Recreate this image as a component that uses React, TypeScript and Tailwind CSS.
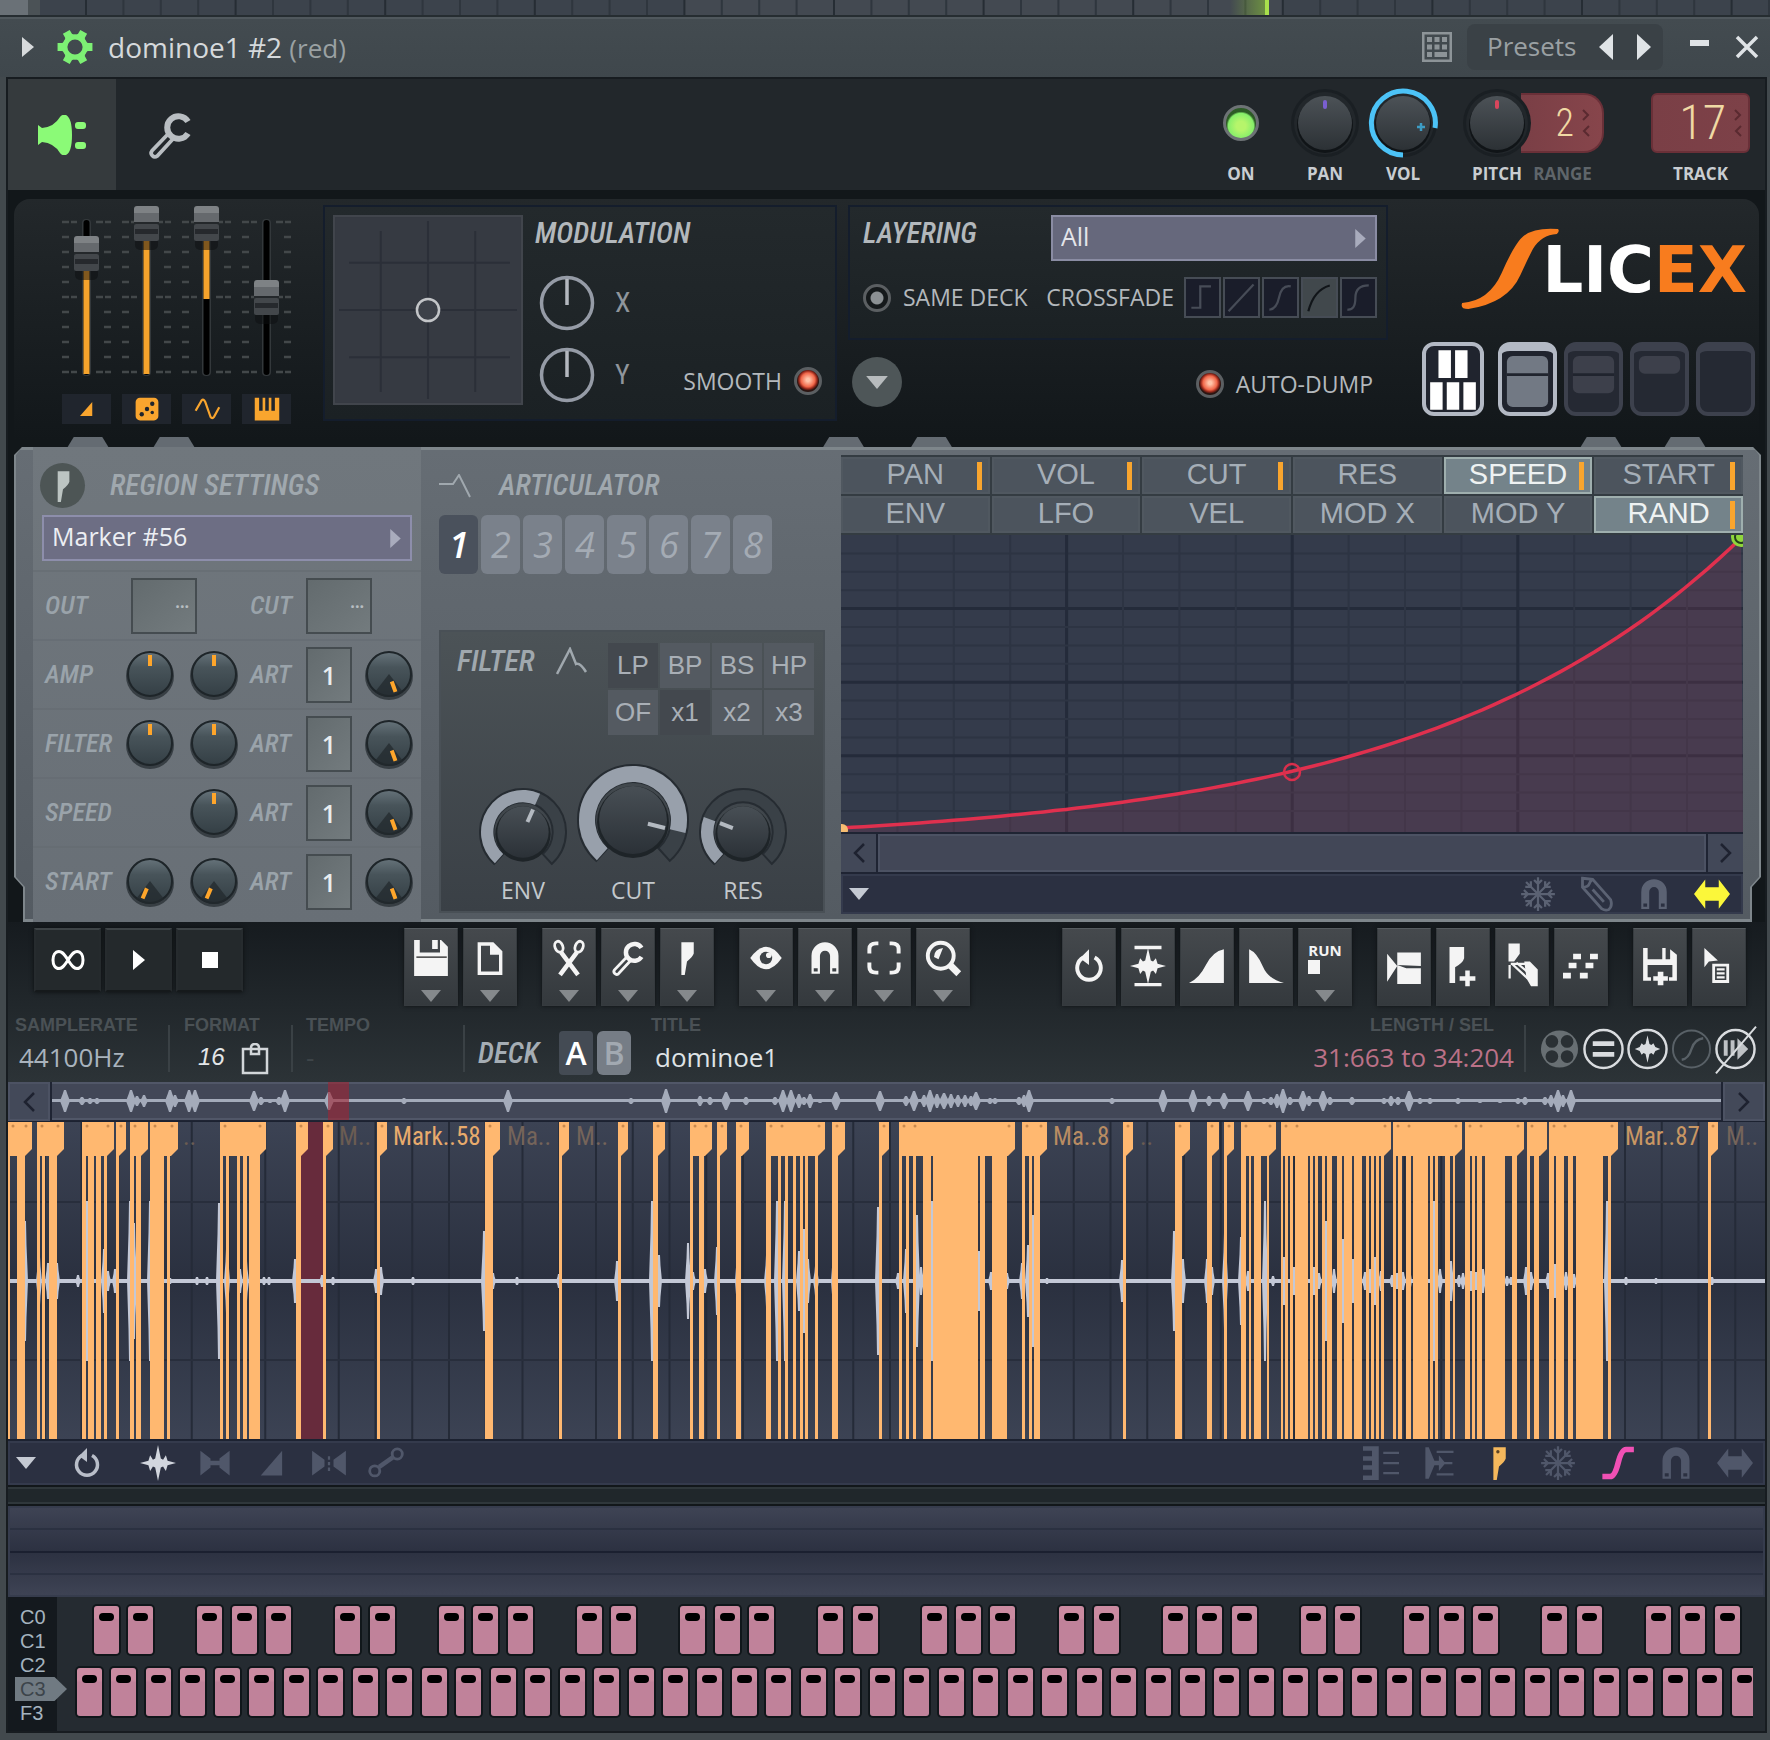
import React from "react";
import clsx from "clsx";

const narrow = "font-['Roboto_Condensed','Liberation_Sans',sans-serif]";
const display = "font-['Roboto_Condensed','Liberation_Sans',sans-serif] font-medium italic";

/* ---------- shared bits ---------- */

function Icon({
  children,
  className,
  box = "0 0 32 32",
}: {
  children: React.ReactNode;
  className?: string;
  box?: string;
}) {
  return (
    <svg viewBox={box} className={clsx("shrink-0", className)} fill="currentColor" aria-hidden>
      {children}
    </svg>
  );
}

const Down = ({ className }: { className?: string }) => (
  <Icon box="0 0 20 12" className={clsx("h-3 w-5", className)}>
    <path d="M0 0h20L10 12z" />
  </Icon>
);

const polar = (c: number, r: number, deg: number) => {
  const a = ((deg - 90) * Math.PI) / 180;
  return `${(c + r * Math.cos(a)).toFixed(2)} ${(c + r * Math.sin(a)).toFixed(2)}`;
};

const ring = (c: number, r1: number, r2: number, from: number, to: number) => {
  const big = to - from > 180 ? 1 : 0;
  return `M${polar(c, r1, from)}A${r1} ${r1} 0 ${big} 1 ${polar(c, r1, to)}L${polar(c, r2, to)}A${r2} ${r2} 0 ${big} 0 ${polar(c, r2, from)}Z`;
};

function Range({ label, value }: { label: string; value: number }) {
  return (
    <input
      type="range"
      aria-label={label}
      defaultValue={value}
      className="absolute inset-0 h-full w-full cursor-pointer opacity-0"
    />
  );
}

function SmallKnob({ label, angle }: { label: string; angle: number }) {
  return (
    <div className="relative h-[50px] w-[50px]">
      <svg viewBox="0 0 50 50" className="h-full w-full">
        <ellipse cx="25" cy="26" rx="24" ry="24" fill="#22292e" opacity=".7" />
        <circle cx="25" cy="24" r="22" fill="url(#knobSmall)" stroke="#1e2529" strokeWidth="2" />
        {angle !== 0 && <path d="M25 24L11 42A22 22 0 0 0 39 42Z" fill="#23292d" opacity=".75" />}
        <path d="M25 5v11" stroke="#ffa62b" strokeWidth="4" transform={`rotate(${angle} 25 24)`} />
      </svg>
      <Range label={label} value={angle === 0 ? 50 : angle > 180 ? 0 : 100} />
    </div>
  );
}

const topLabel = "text-[17px] leading-7 font-bold";

function TopKnob({ label, dot }: { label: string; dot: string }) {
  const vol = label === "VOL";
  return (
    <div className="flex w-[70px] flex-col items-center">
      <div className="relative h-[74px] w-[70px]">
        <svg viewBox="0 0 70 74" className="h-full w-full">
          <circle cx="35" cy="37" r="34" fill="#1a1f23" />
          <circle cx="35" cy="37" r="31" fill="#22272b" />
          <circle cx="35" cy="39" r="28" fill="#101417" />
          <circle cx="35" cy="37" r="27" fill="url(#knobTop)" />
          {vol ? (
            <>
              <path d="M35 69A32 32 0 1 1 67 42" fill="none" stroke="#4cc3f7" strokeWidth="5" />
              <path d="M53 37v8M49 41h8" stroke={dot} strokeWidth="2.500" />
            </>
          ) : (
            <path d="M35 16v5" stroke={dot} strokeWidth="4" strokeLinecap="round" />
          )}
        </svg>
        <Range label={label} value={vol ? 78 : 50} />
      </div>
      <span className={clsx(topLabel, "text-[#c9cdd1]")}>{label}</span>
    </div>
  );
}

function BigKnob({ label, size, to }: { label: string; size: number; to: number }) {
  const c = size / 2;
  const R = c - 1;
  const inner = R * 0.69;
  return (
    <label className="flex flex-col items-center">
      <span className="relative block">
        <svg width={size} height={size} viewBox={`0 0 ${size} ${size}`}>
          <path d={ring(c, R, inner, -138, 138)} fill="#3a4147" stroke="#262c32" strokeWidth="2" />
          <path d={ring(c, R - 1, inner, -138, to)} fill="#98a0ab" />
          <circle cx={c} cy={c + 2} r={inner - 2} fill="#1e2428" />
          <circle cx={c} cy={c} r={inner - 4} fill="url(#knobBig)" />
          <path
            d={`M${c} ${c - inner + 5}v${R * 0.32}`}
            stroke="#b4bac1"
            strokeWidth="4"
            transform={`rotate(${to} ${c} ${c})`}
          />
        </svg>
        <Range label={label} value={Math.round(((to + 138) / 276) * 100)} />
      </span>
      <span className="text-[23px] leading-7 text-[#c3c8cc]">{label}</span>
    </label>
  );
}

const led =
  "m-0 h-[28px] w-[28px] shrink-0 appearance-none rounded-full border-[3px] border-[#5b5f62]";
const ledOff = "bg-[radial-gradient(circle,#8b9093_38%,#15191b_45%)]";
const ledRed = "bg-[radial-gradient(circle_at_50%_45%,#ffc3a8_10%,#f2684a_42%,#8e2418_56%,#2a1512_66%)]";

/* ---------- icon drawings, all on a 32 grid ---------- */

const wrench = (
  <>
    <path d="M28 7A7.500 7.500 0 1 0 28 15" fill="none" stroke="currentColor" strokeWidth="4" />
    <path d="M16 14L4 26.500A2.500 2.500 0 0 0 7.500 30L19 17.500" fill="none" stroke="currentColor" strokeWidth="2.500" />
  </>
);
const magnet = (
  <path
    d="M4 30V14a12 12 0 0 1 24 0v16h-7.500V14a4.500 4.500 0 0 0-9 0v16zM6 25v3h3.500v-3zM22.500 25v3H26v-3z"
    fillRule="evenodd"
  />
);
const flag = <path d="M11 2h11v10q-1 3-6 7l-2 12h-3z" />;
const snow = (
  <g fill="none" stroke="currentColor" strokeWidth="2">
    {[0, 45, 90, 135, 180, 225, 270, 315].map((a) => (
      <path key={a} d="M16 16V1M12.500 3.500L16 7l3.500-3.500" transform={`rotate(${a} 16 16)`} />
    ))}
  </g>
);
const arrows = <path d="M0 16L10 3v7h12V3l10 13-10 13v-7H10v7z" />;
const spike = (
  <path d="M16 0l2.500 12 2 1 2.500-4 1.500 5 7.500 2-7.500 2-1.500 5-2.500-4-2 1L16 32l-2.500-12-2-1L9 23l-1.500-5L0 16l7.500-2L9 9l2.500 4 2-1z" />
);
const reload = (
  <>
    <path d="M11 8.500A10.500 10.500 0 1 0 21 8.500" fill="none" stroke="currentColor" strokeWidth="3.500" />
    <path d="M16 1v14L8 9z" />
  </>
);
const save = (
  <>
    <path d="M1 0h5v11h18V0h1l6 6v26H1z" />
    <path d="M17 0h5v8h-5z" />
    <path d="M3 14.500h27v1.500H3z" fill="#555" />
  </>
);

type Tool = { id: string; down?: boolean; art: React.ReactNode };

const toolGroups: Tool[][] = [
  [
    { id: "Save", down: true, art: save },
    {
      id: "New",
      down: true,
      art: <path d="M5 2h14l8 8v21H5zM8 5v23h16V13h-8V5z" fillRule="evenodd" />,
    },
  ],
  [
    {
      id: "Cut",
      down: true,
      art: (
        <g fill="none" stroke="currentColor" strokeWidth="2.500">
          <ellipse cx="7" cy="6" rx="3.500" ry="5" transform="rotate(-20 7 6)" />
          <ellipse cx="25" cy="6" rx="3.500" ry="5" transform="rotate(20 25 6)" />
          <path d="M9 11L24 31M23 11L8 31" strokeWidth="4" />
        </g>
      ),
    },
    { id: "Tools", down: true, art: wrench },
    { id: "Markers", down: true, art: flag },
  ],
  [
    {
      id: "View",
      down: true,
      art: (
        <>
          <path d="M2 16Q16-4 30 16Q16 36 2 16z" />
          <circle cx="16" cy="16" r="5.500" fill="#3e4347" />
          <circle cx="18.500" cy="13.500" r="2.500" />
        </>
      ),
    },
    { id: "Snap", down: true, art: magnet },
    {
      id: "Zoom area",
      down: true,
      art: (
        <path
          d="M3 12V8q0-5 6-5h2M21 3h2q6 0 6 5v4M29 20v4q0 5-6 5h-2M11 29H9q-6 0-6-5v-4"
          fill="none"
          stroke="currentColor"
          strokeWidth="3.500"
        />
      ),
    },
    {
      id: "Zoom",
      down: true,
      art: (
        <>
          <circle cx="14" cy="14" r="11.500" fill="none" stroke="currentColor" strokeWidth="3.500" />
          <path d="M8 15q0-7 8-8l-4 10z" />
          <path d="M22 22l8 8" stroke="currentColor" strokeWidth="6" />
        </>
      ),
    },
  ],
];

const editGroups: Tool[][] = [
  [
    { id: "Undo", art: reload },
    {
      id: "Normalize",
      art: (
        <>
          <path d="M4 -2h24v3H4zM4 31h24v3H4z" />
          <path d="M16 0l2.500 11 2 1 2.500-3 1.500 5 7.500 2-7.500 2-1.500 5-2.500-3-2 1L16 32l-2.500-11-2-1L9 23l-1.500-5L0 16l7.500-2L9 9l2.500 3 2-1z" />
        </>
      ),
    },
    { id: "Fade in", art: <path d="M0 31Q9 27 15 15Q21 3 31 1v30z" /> },
    { id: "Fade out", art: <path d="M1 1Q8 4 13 16Q18 28 32 31H1z" /> },
    { id: "Run", down: true, art: null },
  ],
  [
    { id: "Trim", art: <path d="M1 5l9 11L1 30zM10 4h21v12l-21-1 8 3h13v14H10z" /> },
    {
      id: "Add marker",
      art: (
        <>
          <path d="M4-1h13v10q-1 4-8 8v14H4z" />
          <path d="M18 20h4v5h5v4h-5v5h-4v-5h-5v-4h5z" />
        </>
      ),
    },
    {
      id: "Slice",
      art: (
        <>
          <path d="M4-4h10v9l-5 7H4zM18 12h5l7 7v15h-6l-4-7z" />
          <path d="M5 15v12M7 14l14 13M11 13l12 10M6 14h14" stroke="currentColor" strokeWidth="2" />
        </>
      ),
    },
    {
      id: "Step",
      art: <path d="M9 5h7v5H9zM24 5h7v5h-7zM5 13h7v5H5zM20 13h7v5h-7zM0 22h7v5H0zM15 22h7v5h-7z" />,
    },
  ],
  [
    {
      id: "Save as",
      art: (
        <path
          d="M1 0h4v10h13V0h3v10h4V1l6 5v23h-7v-3h3V15H5v11h3v3H1zM14 21h5v4h4v4h-4v4h-5v-4h-4v-4h4z"
          fillRule="evenodd"
        />
      ),
    },
    {
      id: "Drag selection",
      art: (
        <>
          <path d="M3 0l12 11-8 1-4 5z" />
          <path d="M10 14h15v17H10zM12.500 16.500v12h10v-12zM14 18h7v2h-7zM14 21.500h7v2h-7zM14 25h7v2h-7z" fillRule="evenodd" />
        </>
      ),
    },
  ],
];

function ToolButton({ id, down, art }: Tool) {
  return (
    <button
      aria-label={id}
      className="flex h-[78px] w-[54px] flex-col items-center border border-[#363b3f] border-t-[#565c60] bg-linear-to-b from-[#45494d] to-[#34393d] pt-[11px] text-[#f4f4f4] shadow-[0_0_4px_#0d1113]"
    >
      {id === "Run" ? (
        <span className="flex h-[42px] flex-col items-start text-[15px] leading-5 font-bold">
          RUN
          <span className="h-[14px] w-3 bg-[#f4f4f4]" />
        </span>
      ) : (
        <Icon className={clsx("h-9 w-9 overflow-visible", !down && "mt-2")}>{art}</Icon>
      )}
      {down && <Down className={clsx("text-[#85898c]", id === "Run" ? "mt-2" : "mt-[14px]")} />}
    </button>
  );
}

/* ---------- title + toolbar ---------- */

function TimelineStrip() {
  return (
    <svg viewBox="0 0 1770 17" preserveAspectRatio="none" className="block h-[17px] w-full bg-[#3c434c]">
      <rect x="684" width="598" height="17" fill="#434951" />
      <rect width="28" height="17" fill="#6a7177" />
      <rect x="28" width="12" height="17" fill="#4b5256" />
      {Array.from({ length: 46 }, (_, i) => (
        <path key={i} d={`M${86 + i * 37.4} 0v17`} stroke={i % 4 === 0 ? "#262d34" : "#2f363e"} strokeWidth="2" />
      ))}
      <rect x="1230" width="36" height="17" fill="url(#playhead)" />
      <rect x="1265" width="4" height="17" fill="#a9e04c" />
      <rect y="15" width="1770" height="2" fill="#262d31" />
    </svg>
  );
}

function TitleBar() {
  return (
    <header className="flex h-[60px] items-center border-t-2 border-[#50585d] bg-linear-to-b from-[#434b50] to-[#3f474c] pr-[11px] pb-[3px] pl-[22px] text-[26px]">
      <Icon box="0 0 12 20" className="h-5 w-3 text-[#d7dadc]">
        <path d="M0 0l12 10L0 20z" />
      </Icon>
      <Icon className="ml-[23px] h-9 w-9 text-[#7df074]">
        <circle cx="16" cy="16" r="9" fill="none" stroke="currentColor" strokeWidth="4.500" />
        {[30, 90, 150, 210, 270, 330].map((a) => (
          <path key={a} d="M10.500 8.500l2-4v-4h7v4l2 4z" transform={`rotate(${a} 16 16)`} />
        ))}
      </Icon>
      <h1 className="ml-[15px] text-[28px] text-[#d5d9dc]">
        dominoe1 #2 <span className="text-[26px] text-[#9aa1a3]">(red)</span>
      </h1>
      <button aria-label="Keyboard" className="ml-auto text-[#8d9498]">
        <Icon className="h-[32px] w-[32px]">
          <path d="M1 1h30v30H1zM3.500 3.500v25h25v-25z" fillRule="evenodd" />
          <path d="M6 6h5v5H6zM13.500 6h5v5h-5zM21 6h5v5h-5zM6 13.500h5v5H6zM13.500 13.500h5v5h-5zM21 13.500h5v5h-5zM6 21h5v5H6zM13.500 21H26v5H13.500z" />
        </Icon>
      </button>
      <div className="ml-[14px] flex h-[46px] w-[196px] items-center rounded-lg bg-[#3a4146] pl-5 text-[#9aa0a3]">
        <span>Presets</span>
        <button aria-label="Previous preset" className="ml-auto text-[#dfe3e6]">
          <Icon box="0 0 14 26" className="h-[26px] w-[14px]">
            <path d="M14 0L0 13l14 13z" />
          </Icon>
        </button>
        <button aria-label="Next preset" className="mr-3 ml-6 text-[#dfe3e6]">
          <Icon box="0 0 14 26" className="h-[26px] w-[14px]">
            <path d="M0 0l14 13L0 26z" />
          </Icon>
        </button>
      </div>
      <button aria-label="Minimize" className="mb-2 ml-[27px] h-[6px] w-[19px] bg-[#dfe3e6]" />
      <button aria-label="Close" className="ml-[26px] text-[#dfe3e6]">
        <Icon box="0 0 24 24" className="h-6 w-6">
          <path d="M2 2l20 20M22 2L2 22" stroke="currentColor" strokeWidth="3.500" />
        </Icon>
      </button>
    </header>
  );
}

function Toolbar() {
  const spin = (
    <span className="flex flex-col text-[#5a2a30]">
      <Icon box="0 0 8 12" className="h-3 w-2">
        <path d="M1 1l5 5-5 5" fill="none" stroke="currentColor" strokeWidth="2" />
      </Icon>
      <Icon box="0 0 8 12" className="mt-1 h-3 w-2">
        <path d="M7 1L2 6l5 5" fill="none" stroke="currentColor" strokeWidth="2" />
      </Icon>
    </span>
  );
  return (
    <div className="flex h-[111px] items-stretch bg-[#22272b] pr-[15px]">
      <button aria-label="Instrument" className="flex w-[108px] items-center justify-center bg-[#353a3d] text-[#8bfa77]">
        <Icon box="0 0 48 40" className="h-10 w-12">
          <path d="M0 10l4 3Q16 12 22 2q2-3 6-2 6 3 6 20t-6 20q-4 1-6-2Q16 28 4 27l-4 3z" />
          <rect x="37" y="7" width="11" height="7" rx="3" />
          <rect x="37" y="27" width="11" height="7" rx="3" />
        </Icon>
      </button>
      <button aria-label="Settings" className="flex w-[108px] items-center justify-center text-[#b9bec2]">
        <Icon className="h-[48px] w-[48px]">{wrench}</Icon>
      </button>
      <div className="ml-auto flex items-start pt-[7px] text-[#c9cdd1]">
        <label className="flex w-10 flex-col items-center">
          <span className="flex h-[74px] items-center">
            <input
              type="checkbox"
              defaultChecked
              className="h-[36px] w-[36px] appearance-none rounded-full border-[3px] border-[#6d7275] bg-[radial-gradient(circle_at_50%_60%,#b6f56b_20%,#86ee6a_54%,#2d5b26_62%)]"
            />
          </span>
          <span className={topLabel}>ON</span>
        </label>
        <div className="ml-[29px] flex gap-2">
          <TopKnob label="PAN" dot="#7a5fd0" />
          <TopKnob label="VOL" dot="#3d9cc4" />
        </div>
        <div className="z-10 ml-6">
          <TopKnob label="PITCH" dot="#d8465c" />
        </div>
        <label className="-ml-[11px] flex w-[83px] flex-col items-center">
          <span className="flex h-[74px] w-full items-center">
            <span className="flex h-[60px] w-full items-center rounded-r-[20px] border-2 border-l-0 border-[#6a3038] bg-linear-to-r from-[#7a3f46] to-[#87454b] pr-3">
              <input
                defaultValue="2"
                className={clsx(narrow, "w-full min-w-0 pr-2 text-right text-[38px] font-light text-[#f0d9a4]")}
              />
              {spin}
            </span>
          </span>
          <span className={clsx(topLabel, "text-[#5f656a]")}>RANGE</span>
        </label>
        <label className="ml-[47px] flex w-[99px] flex-col items-center">
          <span className="flex h-[74px] w-full items-center">
            <span className="flex h-[60px] w-full items-center rounded-md border-2 border-[#6a3038] bg-linear-to-r from-[#7a3f46] to-[#7d4148] pr-[6px]">
              <input
                defaultValue="17"
                className={clsx(narrow, "w-full min-w-0 pr-2 text-right text-[48px] font-light text-[#f0d9a4]")}
              />
              {spin}
            </span>
          </span>
          <span className={topLabel}>TRACK</span>
        </label>
      </div>
    </div>
  );
}

/* ---------- synth panel ---------- */

const faders = [
  { id: "Volume", top: 30, from: 64, to: 168, art: <path d="M22 8v16H8z" /> },
  {
    id: "Randomness",
    top: 0,
    from: 34,
    to: 168,
    art: (
      <>
        <rect x="3" y="3" width="26" height="26" rx="5" />
        <g fill="#20252d">
          <circle cx="10" cy="22" r="2.500" />
          <circle cx="16" cy="16" r="2.500" />
          <circle cx="22" cy="10" r="2.500" />
          <circle cx="22" cy="20" r="2" />
        </g>
      </>
    ),
  },
  {
    id: "LFO",
    top: 0,
    from: 34,
    to: 93,
    art: <path d="M3 18L10 6q2-2 4 2l6 17q2 3 4 0l6-11" fill="none" stroke="currentColor" strokeWidth="2.500" />,
  },
  { id: "Key", top: 74, from: 0, to: 0, art: <path d="M2 3h5v15h4V3h3v15h4V3h3v15h4V3h5v26H2z" /> },
];

function Fader({ top, from, to, id, art }: (typeof faders)[number]) {
  return (
    <label className="flex flex-col">
      <span className="relative block h-[170px] w-[49px]">
        <svg viewBox="0 0 49 170" className="h-full w-full">
          {Array.from({ length: 11 }, (_, i) => {
            const w = i % 5 === 0 ? 15 : 7;
            return (
              <path key={i} d={`M0 ${16 + i * 15}h${w}M${49 - w} ${16 + i * 15}h${w}`} stroke="#43484a" strokeWidth="2.500" strokeDasharray="7 2" />
            );
          })}
          <rect x="20" y="13" width="9" height="157" rx="4" fill="#33383b" />
          <rect x="21.500" y="14" width="6" height="155" rx="3" fill="#000" />
          {to > 0 && <rect x="21.500" y={from} width="6" height={to - from} fill="#f5a32c" />}
          <rect x="13" y={top + 4} width="23" height="40" rx="5" fill="#0b0e10" opacity=".5" />
          <rect x="12" y={top} width="25" height="16" rx="3" fill="#7e8285" />
          <rect x="12" y={top + 7} width="25" height="9" fill="#65696d" />
          <path d={`M12 ${top + 17}h25M12 ${top + 24}h25`} stroke="#24282b" strokeWidth="2" />
          <rect x="12" y={top + 18} width="25" height="17" rx="2" fill="#43474b" />
          <rect x="13" y={top + 23} width="23" height="5" fill="#26292d" />
        </svg>
        <Range label={id} value={50} />
      </span>
      <span className="mt-[18px] flex h-[30px] items-center justify-center bg-[#20252d] text-[#f9a52e]">
        <Icon className="h-[28px] w-[30px]">{art}</Icon>
      </span>
    </label>
  );
}

const crossfades = ["M6 32h10V8h12", "M4 36L32 6", "M6 34q8 0 11-14T30 8", "M6 36Q12 12 30 7", "M6 34q9 1 9-13T30 7"];

function SynthPanel() {
  return (
    <div className="mx-[6px] mt-[9px] flex h-[241px] rounded-t-2xl bg-linear-to-b from-[#23282b] to-[#12171a] text-[#b3b8bc]">
      <div className="flex w-[309px] shrink-0 gap-[11px] pt-[7px] pl-[48px]">
        {faders.map((f) => (
          <Fader key={f.id} {...f} />
        ))}
      </div>
      <section className="mt-[6px] flex h-[216px] w-[514px] shrink-0 border-2 border-[#141d2c] bg-linear-to-b from-[#23292c] to-[#1b2124] p-2">
        <svg viewBox="0 0 189 189" className="h-[190px] w-[190px]">
          <rect x="1" y="1" width="187" height="187" fill="#363a42" stroke="#41454c" strokeWidth="2" />
          <g stroke="#2b2f38" strokeWidth="2">
            <path d="M47.500 16v160M94.500 6v177M141.500 16v160M16 47.500h160M6 94.500h177M16 141.500h160" />
          </g>
          <circle cx="94.500" cy="94.500" r="11" fill="#3d4149" stroke="#c3c5c8" strokeWidth="2.500" />
        </svg>
        <div className="ml-3 flex flex-1 flex-col pr-[5px]">
          <h2 className={clsx(display, "text-[29px] leading-9")}>MODULATION</h2>
          <div className="mt-4 flex h-[72px] items-center gap-5 pl-1">
            <ModDial label="X" />
          </div>
          <div className="flex h-[72px] items-center gap-5 pl-1">
            <ModDial label="Y" />
            <label className="mt-3 ml-auto flex items-center gap-3 text-[23px]">
              SMOOTH
              <input type="checkbox" defaultChecked className={clsx(led, ledRed)} />
            </label>
          </div>
        </div>
      </section>
      <div className="mt-[6px] ml-[11px] w-[540px] shrink-0">
        <section className="h-[135px] border-2 border-[#141d2c] bg-linear-to-b from-[#23292c] to-[#1b2124] pt-2 pr-[9px] pl-[13px]">
          <div className="flex items-start justify-between">
            <h2 className={clsx(display, "text-[29px] leading-9")}>LAYERING</h2>
            <Select label="Layering" value="All" className="w-[326px] border-[#8a8ca3] bg-[#66687c] text-[#e4e5ea]" />
          </div>
          <div className="mt-4 flex items-center text-[23px]">
            <label className="flex items-center gap-3">
              <input type="checkbox" className={clsx(led, ledOff)} />
              SAME DECK
            </label>
            <span className="ml-auto pr-[10px]">CROSSFADE</span>
            <div className="flex gap-[2px]">
              {crossfades.map((d, i) => (
                <button
                  key={d}
                  aria-label={`Crossfade ${i + 1}`}
                  className={clsx("h-[41px] w-[37px] border-2 border-[#464c55]", i === 3 ? "bg-[#41484c]" : "bg-[#1a1d2a]")}
                >
                  <svg viewBox="0 0 37 41" className="h-full w-full">
                    <path d={d} fill="none" stroke={i === 3 ? "#111519" : "#474c57"} strokeWidth="2.500" />
                  </svg>
                </button>
              ))}
            </div>
          </div>
        </section>
        <div className="mt-[17px] flex items-center justify-between pr-[15px] pl-1">
          <button aria-label="Menu" className="flex h-[50px] w-[50px] items-center justify-center rounded-full bg-[#4e5658]">
            <Down className="h-[13px] w-6 text-[#b7bbbd]" />
          </button>
          <label className="flex items-center gap-3 pt-1 text-[23px]">
            <input type="checkbox" defaultChecked className={clsx(led, ledRed)} />
            AUTO-DUMP
          </label>
        </div>
      </div>
      <div className="flex flex-1 flex-col items-end pt-[28px] pr-1">
        <div className="flex items-start pr-2">
          <svg viewBox="0 0 96 82" preserveAspectRatio="none" className="h-[82px] w-[100px]">
            <path d="M94 2Q96 4 93 7Q78 8 70 22Q64 34 58 48Q46 76 8 82Q0 82 2 76Q28 74 40 46Q50 22 58 12Q68 0 94 2z" fill="#f87c1e" />
          </svg>
          <span className="mt-[8px] -ml-[18px] font-['DejaVu_Sans',sans-serif] text-[64px] leading-[70px] font-bold text-white">
            LIC<span className="text-[#f87c1e]">EX</span>
          </span>
        </div>
        <div className="mt-[33px] flex gap-[7px]">
          <LayoutButton kind={0} />
          <LayoutButton kind={1} />
          <LayoutButton kind={2} />
          <LayoutButton kind={3} />
          <LayoutButton kind={4} />
        </div>
      </div>
    </div>
  );
}

function ModDial({ label }: { label: string }) {
  return (
    <>
      <span className="relative block">
        <svg viewBox="0 0 56 56" className="h-[56px] w-[56px]">
          <circle cx="28" cy="28" r="25.500" fill="none" stroke="#959ba6" strokeWidth="3.500" />
          <path d="M28 4v26" stroke="#b4b8bf" strokeWidth="3.500" />
        </svg>
        <Range label={label} value={50} />
      </span>
      <span className={clsx(narrow, "text-[28px] text-[#8f959c]")}>{label}</span>
    </>
  );
}

function LayoutButton({ kind }: { kind: number }) {
  const lit = kind < 2;
  return (
    <button
      aria-label={`Layout ${kind + 1}`}
      className={clsx(
        "h-[74px] rounded-xl border-[4px]",
        lit ? "border-[#b3b9c4] bg-[#20242e]" : "border-[#3d414d] bg-[#252933]",
        kind === 0 ? "mr-[7px] w-[62px]" : "w-[59px] border-t-[9px]"
      )}
    >
      <svg viewBox="0 0 52 62" preserveAspectRatio="none" className="h-full w-full">
        {kind === 0 && <path d="M12 4h12v26H12zM28 4h12v26H28zM4 34h12v26H4zM20 34h12v26H20zM36 34h12v26H36z" fill="#fff" />}
        {kind > 0 && kind < 4 && (
          <rect x="5" y="5" width="42" height={[0, 52, 38, 18][kind]} rx="6" fill={kind === 1 ? "#727984" : "#3d404b"} />
        )}
        {(kind === 1 || kind === 2) && <path d="M5 24h42" stroke="#20242e" strokeWidth="3" />}
      </svg>
    </button>
  );
}

function Select({ label, value, className }: { label: string; value: string; className: string }) {
  return (
    <div className="relative">
      <select aria-label={label} className={clsx("h-[46px] appearance-none rounded-none border-2 px-2 pb-[2px] text-[25px]", className)}>
        <option>{value}</option>
      </select>
      <Icon box="0 0 11 20" className="pointer-events-none absolute top-[14px] right-[11px] h-[19px] w-[11px] text-[#a9acbd]">
        <path d="M0 0l11 10L0 20z" />
      </Icon>
    </div>
  );
}

/* ---------- region settings, articulator, filter ---------- */

function ArtBox({ label }: { label: string }) {
  return (
    <input
      aria-label={label}
      defaultValue="1"
      className="h-[56px] w-[46px] border-2 border-[#454c50] bg-linear-to-br from-[#636b6e] to-[#737b7e] text-center text-[25px] font-semibold text-[#e9edf0]"
    />
  );
}

const regionRows: { name: string; left: number[] }[] = [
  { name: "AMP", left: [0, 0] },
  { name: "FILTER", left: [0, 0] },
  { name: "SPEED", left: [0] },
  { name: "START", left: [203, 203] },
];

function RegionSettings() {
  const rowStyle =
    "grid h-[69px] grid-cols-[80px_64px_61px_56px_58px_50px] items-center border-t-2 border-[#646b71]/60 pl-3 text-[#9aa3aa]";
  const rowLabel = clsx(display, "text-[26px]");
  const slot =
    "col-span-2 h-[56px] w-[66px] border-2 border-[#454c50] bg-linear-to-br from-[#636b6e] to-[#737b7e] pr-[6px] pb-2 text-right text-base font-bold text-[#b7bdc1]";
  return (
    <section className="w-[388px] shrink-0 bg-linear-to-b from-[#70777d] to-[#686f76]">
      <div className="flex h-[68px] items-center gap-[25px] pt-[9px] pl-[7px]">
        <button aria-label="Marker" className="flex h-[45px] w-[45px] items-center justify-center rounded-full bg-[#4d5555] text-[#bcc4c2]">
          <Icon className="h-[34px] w-[34px]">{flag}</Icon>
        </button>
        <h2 className={clsx(display, "text-[29px] text-[#a0a8ae]")}>REGION SETTINGS</h2>
      </div>
      <div className="mb-[9px] px-[9px]">
        <Select label="Region" value="Marker #56" className="w-full border-[#8d8eab] bg-[#6d6e84] text-[#eceef3]" />
      </div>
      <div className={rowStyle}>
        <span className={rowLabel}>OUT</span>
        <button className={clsx(slot, "ml-[6px]")}>...</button>
        <span className={rowLabel}>CUT</span>
        <button className={slot}>...</button>
      </div>
      {regionRows.map((row) => (
        <div key={row.name} className={rowStyle}>
          <span className={rowLabel}>{row.name}</span>
          {row.left.length === 1 && <span />}
          {row.left.map((a, i) => (
            <SmallKnob key={i} label={`${row.name} ${i + 1}`} angle={a} />
          ))}
          <span className={rowLabel}>ART</span>
          <ArtBox label={`${row.name} articulator`} />
          <SmallKnob label={`${row.name} amount`} angle={160} />
        </div>
      ))}
    </section>
  );
}

function Articulator() {
  const filterButtons = ["LP", "BP", "BS", "HP", "OF", "x1", "x2", "x3"];
  return (
    <section className="w-[420px] shrink-0 pr-4 pl-[18px]">
      <div className="flex h-[68px] items-center gap-[28px] pt-[9px] text-[#a0a8ae]">
        <Icon box="0 0 32 24" className="h-6 w-8">
          <path d="M0 10h14L20 1l11 22" fill="none" stroke="currentColor" strokeWidth="2" />
        </Icon>
        <h2 className={clsx(display, "text-[29px]")}>ARTICULATOR</h2>
      </div>
      <div className="flex gap-[3px]">
        {[1, 2, 3, 4, 5, 6, 7, 8].map((n) => (
          <button
            key={n}
            className={clsx(
              "h-[59px] w-[39px] rounded-md pl-px text-[36px] leading-10 italic",
              n === 1 ? "bg-[#4a515c] font-semibold text-white" : "bg-[#7a818b] text-[#a4abb4]"
            )}
          >
            {n}
          </button>
        ))}
      </div>
      <div className="mt-[56px] flex h-[283px] flex-col border-2 border-[#495056] bg-linear-to-b from-[#4c5357] to-[#3a4046] pt-[11px] pl-4">
        <div className="flex items-start pr-[9px] text-[#a0a8ae]">
          <h2 className={clsx(display, "text-[30px] leading-9")}>FILTER</h2>
          <Icon box="0 0 32 28" className="mt-[4px] ml-[21px] h-7 w-8">
            <path d="M1 27L14 2l6 15q4-2 10 8" fill="none" stroke="currentColor" strokeWidth="2.500" />
          </Icon>
          <div className="ml-auto grid grid-cols-4 gap-x-[2px] gap-y-[2px]">
            {filterButtons.map((b) => (
              <button
                key={b}
                className={clsx(
                  "h-[45px] w-[50px] font-['Liberation_Sans',sans-serif] text-[26px] text-[#a9afb6]",
                  b === "LP" || b === "x1" ? "bg-[#43484e]" : "bg-[#545a61]"
                )}
              >
                {b}
              </button>
            ))}
          </div>
        </div>
        <div className="mt-auto mb-[7px] flex items-end gap-[10px] pl-[22px]">
          <BigKnob label="ENV" size={88} to={24} />
          <BigKnob label="CUT" size={112} to={104} />
          <BigKnob label="RES" size={88} to={-69} />
        </div>
      </div>
    </section>
  );
}

/* ---------- modulation curve ---------- */

const targets = [
  ["PAN", 1],
  ["VOL", 1],
  ["CUT", 1],
  ["RES", 0],
  ["SPEED", 1],
  ["START", 1],
  ["ENV", 0],
  ["LFO", 0],
  ["VEL", 0],
  ["MOD X", 0],
  ["MOD Y", 0],
  ["RAND", 1],
] as const;

const tension = (x: number) => (Math.exp(2.836 * x) - 1) / (Math.exp(2.836) - 1);
const curve = Array.from({ length: 81 }, (_, i) => {
  const x = i / 80;
  return `${(x * 900).toFixed(1)} ${(293 - tension(x) * 290).toFixed(1)}`;
}).join("L");

function CurveEditor() {
  return (
    <section className="flex min-w-0 flex-1 flex-col pt-2 pb-2">
      <div className="grid grid-cols-6 gap-[2px] border-y-2 border-[#343c42] bg-[#343c42]">
        {targets.map(([name, bar]) => {
          const on = name === "SPEED" || name === "RAND";
          return (
            <button
              key={name}
              className={clsx(
                "relative h-[37px] border-2 pb-1 font-['Liberation_Sans',sans-serif] text-[29px] leading-7",
                on ? "border-[#9fafae] bg-[#74838a] text-[#eef2f2]" : "border-[#505860] bg-[#4c545d] text-[#a5aeb7]"
              )}
            >
              {name}
              {bar === 1 && <span className="absolute top-[3px] right-[6px] h-[28px] w-[5px] bg-[#f9a52e]" />}
            </button>
          );
        })}
      </div>
      <svg viewBox="0 0 902 297" preserveAspectRatio="none" className="h-[297px] w-full bg-[#343b4b]">
        {Array.from({ length: 15 }, (_, i) => (
          <React.Fragment key={i}>
            <path d={`M${(i + 1) * 56.4} 0v297`} stroke={i % 4 === 3 ? "#242b3a" : "#2d3443"} strokeWidth={i % 4 === 3 ? 3 : 2} />
            <path d={`M0 ${(i + 1) * 18.4}h902`} stroke={i % 4 === 3 ? "#242b3a" : "#2d3443"} strokeWidth={i % 4 === 3 ? 3 : 2} />
          </React.Fragment>
        ))}
        <path d={`M${curve}L902 297H0Z`} fill="#8a3f5c" fillOpacity=".24" />
        <path d={`M${curve}`} fill="none" stroke="#e0304e" strokeWidth="3.500" />
        <circle cx="451" cy="237" r="8" fill="none" stroke="#d82f4c" strokeWidth="2.500" />
        <circle cx="1" cy="295" r="6" fill="#f7bd72" />
        <circle cx="900" cy="2" r="10" fill="#8fd63c" />
        <circle cx="900" cy="2" r="6" fill="none" stroke="#24401a" strokeWidth="2" />
      </svg>
      <div className="flex h-[42px] gap-[2px] border-y-2 border-[#1f2433] bg-[#1f2433] text-[#1e2230]">
        <button aria-label="Scroll left" className="flex w-[35px] items-center justify-center bg-[#424858]">
          <Chevron />
        </button>
        <span className="flex-1 border-2 border-[#4c5263] bg-[#424757]" />
        <button aria-label="Scroll right" className="flex w-[35px] items-center justify-center bg-[#424858]">
          <Chevron right />
        </button>
      </div>
      <div className="flex flex-1 items-center gap-[22px] border-2 border-[#343a4c] bg-[#2b3041] pr-[11px] pl-[6px] text-[#5b6273]">
        <Down className="mr-auto text-[#c5cad3]" />
        <Icon className="h-9 w-9">{snow}</Icon>
        <Icon className="h-9 w-9">
          <path
            d="M4 2l9 1 16 18q2 6-2 9-3 1-6-1L4 10zM4 10q5 0 6-3t3-4M13 12l10 11"
            fill="none"
            stroke="currentColor"
            strokeWidth="2.500"
          />
        </Icon>
        <Icon className="h-[34px] w-9">{magnet}</Icon>
        <Icon className="h-9 w-9 text-[#fbf73a]">{arrows}</Icon>
      </div>
    </section>
  );
}

function Chevron({ right }: { right?: boolean }) {
  return (
    <Icon box="0 0 12 20" className="h-5 w-3">
      <path d={right ? "M1 1l9 9-9 9" : "M11 1l-9 9 9 9"} fill="none" stroke="currentColor" strokeWidth="2.500" />
    </Icon>
  );
}

function GreyPanel() {
  const bump = "h-[11px] w-[42px] bg-[#646b72] [clip-path:polygon(16%_0,84%_0,100%_100%,0_100%)]";
  return (
    <div className="-mt-[3px] mr-1 ml-[6px]">
      <div className="flex h-[10px] pr-[55px] pl-[53px]">
        <span className={bump} />
        <span className={clsx(bump, "ml-[44px]")} />
        <span className="flex-[627]" />
        <span className={bump} />
        <span className={clsx(bump, "ml-[46px]")} />
        <span className="flex-[627]" />
        <span className={bump} />
        <span className={clsx(bump, "ml-[42px]")} />
      </div>
      <div className="bg-[#7e868b] [clip-path:polygon(8px_0,calc(100%-8px)_0,100%_8px,100%_430px,calc(100%-9px)_440px,calc(100%-9px)_100%,9px_100%,9px_440px,0_430px,0_8px)]">
        <div className="flex h-[475px] border-y-[3px] border-[#7e868b] bg-linear-to-b from-[#666d74] to-[#545b62] pr-[18px] pl-[19px] *:-my-[3px] [clip-path:polygon(8px_0,calc(100%-8px)_0,calc(100%-2px)_8px,calc(100%-2px)_430px,calc(100%-11px)_440px,calc(100%-11px)_100%,11px_100%,11px_440px,2px_430px,2px_8px)]">
          <RegionSettings />
          <Articulator />
          <CurveEditor />
        </div>
      </div>
    </div>
  );
}

/* ---------- transport + info ---------- */

function Transport() {
  const btn =
    "flex h-[64px] w-[67px] items-center justify-center border-2 border-t-[#3d4346] border-r-[#262b2e] border-b-[#15191b] border-l-[#262b2e] bg-[#24292c] text-white shadow-[0_0_4px_#0b0e10]";
  return (
    <div className="flex items-start pt-[6px] pr-[19px] pl-[26px]">
      <div className="flex gap-1">
        <button aria-label="Loop" className={btn}>
          <Icon box="0 0 34 20" className="h-5 w-[34px]">
            <path
              d="M17 10C12 2 10 1.500 8 1.500c-8 0-8 17 0 17 2 0 4-.5 9-8.500s7-8.500 9-8.500c8 0 8 17 0 17-2 0-4-.5-9-8.500z"
              fill="none"
              stroke="currentColor"
              strokeWidth="3"
            />
          </Icon>
        </button>
        <button aria-label="Play" className={btn}>
          <Icon box="0 0 12 20" className="h-5 w-3">
            <path d="M0 0l12 10L0 20z" />
          </Icon>
        </button>
        <button aria-label="Stop" className={btn}>
          <span className="h-4 w-4 bg-white" />
        </button>
      </div>
      <span className="flex-[7]" />
      <div className="flex gap-[25px]">
        {toolGroups.map((g, i) => (
          <div key={i} className="flex gap-[5px]">
            {g.map((t) => (
              <ToolButton key={t.id} {...t} />
            ))}
          </div>
        ))}
      </div>
      <span className="flex-[4]" />
      <div className="flex gap-[25px]">
        {editGroups.map((g, i) => (
          <div key={i} className="flex gap-[5px]">
            {g.map((t) => (
              <ToolButton key={t.id} {...t} />
            ))}
          </div>
        ))}
      </div>
    </div>
  );
}

const infoLabel = "font-['Liberation_Sans',sans-serif] text-[18px] leading-5 font-bold text-[#4a5155]";

function InfoBar() {
  const rule = "my-[10px] w-[2px] bg-[#3a4145]";
  return (
    <div className="flex h-[76px] pt-[9px] text-[26px] leading-[44px] text-[#c0c5ca]">
      <div className="w-[160px] pl-[7px]">
        <div className={infoLabel}>SAMPLERATE</div>
        <div className="pl-1 text-[#a9b3bd]">44100Hz</div>
      </div>
      <div className={rule} />
      <div className="w-[121px] pl-[14px]">
        <div className={infoLabel}>FORMAT</div>
        <div className="flex items-center gap-4 pl-[14px] text-[#e3e6e8]">
          <span className="font-['Liberation_Sans',sans-serif] text-2xl leading-[44px] italic">16</span>
          <Icon box="0 0 28 32" className="mt-1 h-8 w-7 text-[#d2d6d9]">
            <path d="M2 6h24v24H2zM10 11V5q0-4 4-4t4 4v6z" fill="none" stroke="currentColor" strokeWidth="2.500" />
          </Icon>
        </div>
      </div>
      <div className={rule} />
      <div className="w-[170px] pl-[13px]">
        <div className={infoLabel}>TEMPO</div>
        <div className="text-[#3e4549]">-</div>
      </div>
      <div className={rule} />
      <div className="flex items-center gap-1 pt-2 pl-[13px]">
        <span className={clsx(display, "w-[77px] text-[29px] text-[#a5adb4]")}>DECK</span>
        <button className="h-11 w-[34px] rounded bg-[#444b54] text-[32px] leading-10 font-semibold text-white">A</button>
        <button className="h-11 w-[34px] rounded-md bg-[#767d86] text-[32px] leading-10 font-semibold text-[#a2a9b1]">
          B
        </button>
      </div>
      <div className="pl-5">
        <div className={infoLabel}>TITLE</div>
        <div className="pl-1 text-[#dfe3e6]">dominoe1</div>
      </div>
      <div className="ml-auto pr-[10px] text-right">
        <div className={clsx(infoLabel, "pr-5")}>LENGTH / SEL</div>
        <div className="text-[#bb7187]">31:663 to 34:204</div>
      </div>
      <div className={rule} />
      <div className="flex items-center gap-px pr-2 pl-3 text-[#d9dcdf]">
        <Icon box="0 0 44 44" className="h-11 w-[43px] text-[#686f73]">
          <circle cx="22" cy="22" r="19" />
          <g fill="#2a3034">
            {[45, 135, 225, 315].map((a) => (
              <circle key={a} cx="22" cy="11" r="6.500" transform={`rotate(${a} 22 22)`} />
            ))}
          </g>
        </Icon>
        <Icon box="0 0 44 44" className="h-11 w-[43px]">
          <circle cx="22" cy="22" r="19.500" fill="none" stroke="currentColor" strokeWidth="2.500" />
          <path d="M11 14h22v5H11zM11 25h22v5H11z" />
        </Icon>
        <Icon box="0 0 44 44" className="h-11 w-[43px]">
          <circle cx="22" cy="22" r="19.500" fill="none" stroke="currentColor" strokeWidth="2.500" />
          <path d="M22 8l2 9 2 1 2-2 2 4 5 2-5 2-2 4-2-2-2 1-2 9-2-9-2-1-2 2-2-4-5-2 5-2 2-4 2 2 2-1z" />
        </Icon>
        <Icon box="0 0 44 44" className="h-11 w-[43px] text-[#596167]">
          <circle cx="22" cy="22" r="19" fill="none" stroke="currentColor" strokeWidth="2" />
          <path d="M12 33q7-1 10-11t12-11" fill="none" stroke="currentColor" strokeWidth="2.500" />
        </Icon>
        <Icon box="0 0 44 44" className="h-11 w-[43px] overflow-visible">
          <circle cx="22" cy="22" r="19.500" fill="none" stroke="currentColor" strokeWidth="2.500" />
          <path d="M10 13h4v16h-4zM17 13h4v16h-4zM24 11l11 11-11 11z" opacity=".85" />
          <path d="M2 47L43-1" stroke="currentColor" strokeWidth="2" />
        </Icon>
      </div>
    </div>
  );
}

/* ---------- overview + waveform ---------- */

// x, half height
const overview = [
  [65, 11], [82, 4], [90, 3], [97, 3], [131, 11], [137, 5], [144, 6], [170, 11], [175, 6], [189, 11], [195, 11],
  [254, 10], [261, 4], [270, 2], [279, 4], [285, 11], [329, 9], [404, 3], [508, 11], [631, 3], [666, 12], [700, 5],
  [710, 4], [726, 9], [746, 4], [775, 4], [783, 11], [791, 11], [799, 7], [804, 4], [810, 7], [820, 2], [836, 9],
  [880, 10], [906, 5], [914, 10], [924, 6], [930, 11], [937, 7], [944, 8], [951, 7], [958, 6], [965, 6], [971, 5], [976, 9],
  [990, 3], [995, 3], [1019, 4], [1024, 6], [1029, 11], [1112, 3], [1163, 11], [1193, 11], [1209, 5], [1224, 8],
  [1248, 10], [1264, 3], [1271, 4], [1277, 7], [1283, 12], [1290, 4], [1303, 10], [1309, 5], [1323, 10], [1330, 4],
  [1352, 4], [1384, 3], [1391, 5], [1398, 4], [1409, 10], [1420, 3], [1430, 3], [1458, 3], [1480, 2], [1500, 2],
  [1518, 3], [1525, 4], [1545, 4], [1551, 6], [1558, 11], [1563, 6], [1571, 11],
];

const spikes = [
  [25, 60], [39, 24], [48, 18], [57, 18], [78, 6], [87, 80], [104, 32], [108, 10], [115, 12], [130, 80], [134, 58],
  [150, 80], [170, 3], [197, 4], [207, 4], [219, 78], [227, 32], [240, 12], [246, 20], [264, 4], [269, 4], [295, 22],
  [322, 6], [333, 4], [376, 12], [381, 14], [413, 4], [484, 50], [493, 8], [517, 4], [559, 7], [617, 20], [652, 80], [659, 26],
  [688, 38], [693, 9], [705, 12], [717, 34], [738, 34], [767, 26], [777, 80], [785, 80], [799, 30], [804, 52],
  [808, 22], [816, 15], [834, 34], [878, 74], [898, 8], [906, 32], [917, 66], [921, 14], [932, 80], [979, 30], [991, 9],
  [1007, 8], [1022, 18], [1028, 36], [1033, 66], [1047, 3], [1122, 21], [1174, 50], [1183, 22], [1207, 22], [1212, 14],
  [1225, 48], [1241, 44], [1248, 10], [1265, 80], [1273, 5], [1284, 24], [1294, 14], [1314, 14], [1319, 8], [1326, 60],
  [1334, 12], [1343, 42], [1353, 22], [1365, 9], [1370, 12], [1375, 24], [1381, 10], [1392, 6], [1397, 8], [1403, 9],
  [1409, 16], [1434, 80], [1440, 12], [1451, 20], [1459, 6], [1463, 8], [1471, 10], [1476, 9], [1483, 12],
  [1507, 5], [1511, 4], [1526, 14], [1531, 9], [1548, 8], [1555, 17], [1566, 9], [1574, 7], [1607, 80], [1626, 4],
  [1656, 3], [1683, 2], [1712, 4], [1753, 2],
];

const heads = [
  [8, 32], [37, 64], [82, 114], [116, 126], [130, 148], [150, 178], [220, 266], [296, 308], [323, 333], [377, 387],
  [485, 500], [559, 569], [618, 628], [653, 665], [690, 712], [717, 727], [736, 749], [766, 825], [832, 845],
  [879, 889], [899, 1015], [1022, 1047], [1123, 1133], [1175, 1190], [1207, 1219], [1224, 1234], [1241, 1276],
  [1281, 1391], [1393, 1462], [1465, 1524], [1527, 1547], [1549, 1618], [1708, 1718],
];

const bars = [
  [8, 10], [17, 25], [37, 40], [42, 45], [49, 57], [82, 86], [88, 94], [96, 101], [104, 107], [116, 119], [130, 134],
  [136, 141], [150, 164], [167, 170], [220, 223], [226, 229], [237, 240], [243, 247], [249, 260], [296, 301],
  [323, 326], [377, 380], [485, 493], [559, 562], [618, 621], [653, 658], [690, 693], [699, 704], [717, 720],
  [736, 741], [766, 771], [778, 781], [785, 788], [793, 796], [800, 803], [805, 808], [815, 818], [832, 838],
  [879, 882], [899, 902], [906, 909], [913, 916], [923, 931], [933, 978], [980, 985], [992, 1007], [1022, 1025],
  [1029, 1032], [1034, 1040], [1123, 1126], [1175, 1182], [1207, 1212], [1224, 1227], [1241, 1246], [1249, 1251],
  [1254, 1261], [1267, 1269], [1281, 1283], [1285, 1288], [1290, 1293], [1295, 1308], [1310, 1313], [1315, 1318],
  [1322, 1325], [1327, 1332], [1337, 1342], [1344, 1352], [1354, 1362], [1366, 1369], [1371, 1374], [1376, 1379],
  [1381, 1384], [1393, 1396], [1398, 1402], [1406, 1411], [1413, 1428], [1430, 1433], [1435, 1438], [1445, 1450],
  [1453, 1455], [1465, 1470], [1472, 1475], [1477, 1482], [1485, 1505], [1512, 1517], [1527, 1530], [1534, 1539],
  [1549, 1554], [1556, 1564], [1568, 1573], [1576, 1603], [1608, 1611], [1708, 1711],
];

const markerNames: [number, string, string][] = [
  [183, "..", "text-[#6b5c52]"],
  [339, "M..", "text-[#6b5c52]"],
  [393, "Mark..58", "text-[#e8ab6c]"],
  [507, "Ma..", "text-[#75645a]"],
  [576, "M..", "text-[#75645a]"],
  [1053, "Ma..8", "text-[#b98c62]"],
  [1140, "..", "text-[#6b5c52]"],
  [1625, "Mar..87", "text-[#c99763]"],
  [1726, "M..", "text-[#75645a]"],
];

const burst = (x: number, h: number, y: number, w: number) =>
  `M${x - w} ${y}L${x - w / 2} ${y - h * 0.6}L${x - 1} ${y - h}h2L${x + w / 2} ${y - h * 0.6}L${x + w} ${y}L${x + w / 2} ${y + h * 0.6}L${x + 1} ${y + h}h-2L${x - w / 2} ${y + h * 0.6}Z`;

function Overview() {
  return (
    <div className="flex h-[39px] gap-[2px] bg-[#1f2433] text-[#1e2230]">
      <button aria-label="Scroll left" className="flex w-[42px] items-center justify-center border-2 border-[#4c5263] bg-[#434959]">
        <Chevron />
      </button>
      <svg viewBox="52 1083 1669 38" preserveAspectRatio="none" className="h-[38px] min-w-0 flex-1 bg-[#424757]">
        <path d="M52 1084h1669M52 1120h1669" stroke="#515768" strokeWidth="2" />
        <g fill="#a4abba">
          <rect x="52" y="1100" width="1669" height="3" />
          {overview.map(([x, h], i) => (
            <path key={i} d={burst(x, h, 1102, h > 7 ? 5 : 4)} />
          ))}
        </g>
        <rect x="328" y="1083" width="21" height="38" fill="#a02434" fillOpacity=".6" />
      </svg>
      <button aria-label="Scroll right" className="flex w-[42px] items-center justify-center border-2 border-[#4c5263] bg-[#434959]">
        <Chevron right />
      </button>
    </div>
  );
}

function Waveform() {
  return (
    <div className="relative">
      <svg viewBox="8 1122 1757 320" preserveAspectRatio="none" className="block h-[320px] w-full">
        <rect x="8" y="1122" width="1757" height="320" fill="url(#waveBg)" />
        {Array.from({ length: 48 }, (_, i) => (
          <path key={i} d={`M${8 + i * 36.75} 1122v320`} stroke="#252b38" strokeWidth="2" />
        ))}
        <path d="M8 1203h1757M8 1361h1757" stroke="#282e3c" strokeWidth="2" />
        <rect x="301" y="1122" width="22" height="320" fill="#672b3c" />
        <g fill="#c3c8d6">
          <rect x="8" y="1280" width="1757" height="4" />
          {spikes.map(([x, h], i) => (
            <path key={i} d={burst(x, h, 1282, 3)} />
          ))}
        </g>
        <g fill="#ffb870">
          {bars.map(([a, b]) => (
            <rect key={a} x={a} y="1140" width={b - a} height="301" />
          ))}
          {heads.map(([a, b]) => (
            <path key={a} d={`M${a} 1123H${b}V1150L${b - 7} 1157H${a}Z`} />
          ))}
        </g>
        <g fill="#c98a4e">
          {heads.map(([a, b]) => (
            <React.Fragment key={a}>
              <circle cx={a + 5} cy="1127" r="1.500" />
              {b - a > 20 && <circle cx={b - 6} cy="1127" r="1.500" />}
              {b - a > 50 && <circle cx={a + 16} cy="1127" r="1.500" />}
            </React.Fragment>
          ))}
        </g>
        <path d="M8 1441h1757M8 1122h1757" stroke="#1c2231" strokeWidth="2" />
      </svg>
      {markerNames.map(([x, name, tone]) => (
        <span
          key={x}
          style={{ left: `${((x - 8) / 1757) * 100}%` }}
          className={clsx("absolute top-[2px]", narrow, "text-[25px] leading-7", tone)}
        >
          {name}
        </span>
      ))}
    </div>
  );
}

function WaveTools() {
  const s = "h-9 w-9";
  return (
    <div className="flex h-[44px] items-center border-2 border-[#343a4c] bg-[#2b3041] pr-[10px] pl-[6px] text-[#50576a]">
      <Down className="text-[#c5cad3]" />
      <Icon className={clsx(s, "ml-[33px] p-[2px] text-[#b9bec9]")}>{reload}</Icon>
      <Icon className={clsx(s, "ml-[35px] text-[#d2d6de]")}>{spike}</Icon>
      <div className="ml-[21px] flex gap-[21px]">
        <Icon className={s}>
          <path d="M3 5l9 7v8l-9 7zM29 5l-9 7v8l9 7zM12 14h8v4h-8z" />
        </Icon>
        <Icon className={s}>
          <path d="M25 5v22H6z" />
        </Icon>
        <Icon className={s}>
          <path d="M1 5l11 8v6L1 27zM31 5l-11 8v6l11 8zM15 10h2v3h-2zM15 15h2v3h-2zM15 20h2v3h-2z" />
        </Icon>
        <Icon className={s}>
          <g fill="none" stroke="currentColor" strokeWidth="2.500">
            <circle cx="6" cy="23" r="4.500" />
            <circle cx="26" cy="8" r="4.500" />
            <path d="M10 19.500l12-8.500" strokeWidth="4" />
          </g>
        </Icon>
      </div>
      <div className="ml-auto flex gap-[23px]">
        <Icon className={s}>
          <path d="M0 1h14v30H0v-4h8v-5H0v-4h8v-4H0v-4h8V5H0zM18 6h14v2H18zM18 15h14v2H18zM18 24h14v2H18z" />
        </Icon>
        <Icon className={s}>
          <path d="M3 2h3l5 12h4V9l5 6h7v2h-7l-5 6v-5h-4L6 30H3zM13 5h15v2H13zM13 25h15v2H13z" />
        </Icon>
        <Icon className={clsx(s, "text-[#f5b85c]")}>
          {flag}
          <circle cx="15" cy="6" r="1.500" fill="#5b4325" />
        </Icon>
        <Icon className={s}>{snow}</Icon>
        <Icon className={clsx(s, "text-[#f050b4]")}>
          <path d="M3 28h7q4 0 7-12t7-12h7" fill="none" stroke="currentColor" strokeWidth="5" />
        </Icon>
        <Icon className={s}>{magnet}</Icon>
        <Icon className={s}>{arrows}</Icon>
      </div>
    </div>
  );
}

/* ---------- keyboard ---------- */

function Key({ n }: { n: string }) {
  return (
    <button
      aria-label={n}
      className="flex h-[48px] w-[25px] justify-center rounded-[3px] bg-linear-to-b from-[#cb8ba1] from-25% to-[#c0829a] to-30% pt-[7px] shadow-[0_0_0_2px_#10161a]"
    >
      <span className="h-2 w-[15px] rounded-[4px] bg-black" />
    </button>
  );
}

function Keyboard() {
  return (
    <div className="flex h-[134px] bg-[#252b31]">
      <div className="flex w-[49px] shrink-0 flex-col bg-[#14191e] pt-2 font-['Liberation_Sans',sans-serif] text-xl text-[#a4b3bf]">
        {["C0", "C1", "C2", "C3", "F3"].map((k) => (
          <button
            key={k}
            className={clsx(
              "ml-[7px] h-[24px] pl-[5px] text-left leading-6",
              k === "C3" &&
                "w-[52px] bg-[#707a82] text-[#3c444a] [clip-path:polygon(0_0,76%_0,100%_50%,76%_100%,0_100%)]"
            )}
          >
            {k}
          </button>
        ))}
      </div>
      <div className="mr-3 flex min-w-0 flex-1 flex-col gap-[14px] overflow-hidden pt-[9px] pb-1">
        <div className="grid grid-cols-[repeat(48,minmax(0,1fr))] pr-1 pl-[37px]">
          {Array.from({ length: 48 }, (_, i) => (
            <span key={i}>{i % 7 !== 2 && i % 7 !== 6 && <Key n={`Black key ${i}`} />}</span>
          ))}
        </div>
        <div className="grid w-[calc(100%+13px)] grid-cols-[repeat(49,minmax(0,1fr))] pl-5">
          {Array.from({ length: 49 }, (_, i) => (
            <Key key={i} n={`White key ${i}`} />
          ))}
        </div>
      </div>
    </div>
  );
}

export default function App() {
  return (
    <main className="min-h-screen overflow-hidden bg-[#42494d] font-['Open_Sans',sans-serif]">
      <svg className="absolute h-0 w-0" aria-hidden>
        <defs>
          <linearGradient id="knobSmall" x2="0" y2="1">
            <stop offset="0" stopColor="#66737a" />
            <stop offset=".35" stopColor="#48545a" />
            <stop offset="1" stopColor="#343f45" />
          </linearGradient>
          <linearGradient id="knobTop" x2="0" y2="1">
            <stop offset="0" stopColor="#4c5257" />
            <stop offset="1" stopColor="#2c3135" />
          </linearGradient>
          <linearGradient id="knobBig" x2="0" y2="1">
            <stop offset="0" stopColor="#484f55" />
            <stop offset="1" stopColor="#2b3137" />
          </linearGradient>
          <linearGradient id="playhead">
            <stop offset="0" stopColor="#7fae3c" stopOpacity="0" />
            <stop offset="1" stopColor="#7fae3c" stopOpacity=".7" />
          </linearGradient>
          <linearGradient id="waveBg" x2="0" y2="1">
            <stop offset="0" stopColor="#3c4354" />
            <stop offset=".5" stopColor="#2a303f" />
            <stop offset="1" stopColor="#3c4354" />
          </linearGradient>
        </defs>
      </svg>
      <TimelineStrip />
      <TitleBar />
      <div className="mr-[3px] ml-[6px] border-2 border-[#171c20] bg-[#12171a]">
        <Toolbar />
        <SynthPanel />
        <GreyPanel />
        <div className="bg-linear-to-b from-[#161b1f] to-[#2c3337]">
          <Transport />
          <InfoBar />
        </div>
        <Overview />
        <Waveform />
        <WaveTools />
        <div className="my-[2px] h-[17px] border-y-2 border-[#2f373b] bg-[#20272b]" />
        <div className="flex h-[91px] flex-col border-2 border-[#363c4d] bg-[linear-gradient(#3e4354,#2c3141_50%,#3e4354)]">
          <div className="flex-1 border-b-2 border-[#2b3141]" />
          <div className="flex-1 border-b-2 border-[#1b2030]" />
          <div className="flex-1 border-b-2 border-[#2b3141]" />
          <div className="flex-1" />
        </div>
        <Keyboard />
      </div>
    </main>
  );
}
